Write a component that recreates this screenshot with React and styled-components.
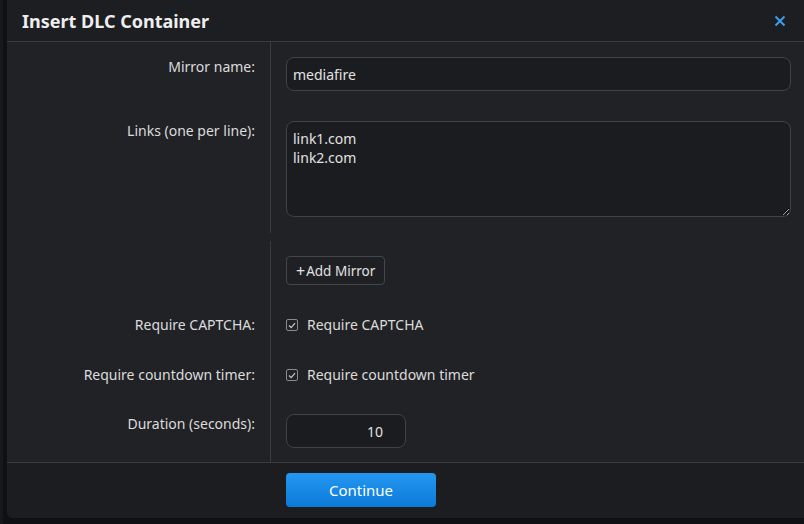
import React from "react"
import styled, { createGlobalStyle } from "styled-components"

const GlobalStyle = createGlobalStyle`
  html, body {
    margin: 0;
    padding: 0;
    background: #111214;
  }
  body {
    font-family: "Noto Sans", "Open Sans", sans-serif;
  }
`

const Page = styled.div`
  display: flex;
  height: 524px;
  padding: 0 0 6px 7px;
  box-sizing: border-box;
  background: linear-gradient(90deg, #17181b 0 3px, #0f1012 3px 7px);
`

const Dialog = styled.div`
  flex: 1;
  display: flex;
  flex-direction: column;
  background: #212226;
  border-bottom-left-radius: 6px;
  overflow: hidden;
`

const Header = styled.div`
  height: 41px;
  display: flex;
  align-items: center;
  justify-content: space-between;
  padding: 0 16px 0 15px;
  background: #1d1e22;
  border-bottom: 1px solid #3a3b3f;
`

const Title = styled.h2`
  margin: 0;
  font-size: 18px;
  font-weight: 700;
  color: #eeeeee;
`

const Close = styled.button`
  border: 0;
  background: none;
  padding: 0;
  display: flex;
  width: 16px;
  height: 16px;
  align-items: center;
  justify-content: center;
  cursor: pointer;
`

const Section = styled.div`
  display: grid;
  grid-template-columns: 264px 1fr;
  & + & {
    margin-top: 8px;
  }
`

const Label = styled.div`
  padding: ${p => p.$top}px 15px ${p => p.$bottom || 0}px 0;
  text-align: right;
  font-size: 14px;
  line-height: 20px;
  color: #dcdcdc;
  border-right: 1px solid #3a3b3f;
`

const Field = styled.div`
  padding: ${p => p.$top}px 13px ${p => p.$bottom || 0}px 15px;
  display: flex;
  align-items: flex-start;
`

const Input = styled.input`
  width: ${p => p.$width || "100%"};
  height: 34px;
  box-sizing: border-box;
  background: #1b1c1f;
  border: 1px solid #414247;
  border-radius: 8px;
  padding: 0 ${p => (p.$right ? "22px" : "6px")} 0 6px;
  text-align: ${p => (p.$right ? "right" : "left")};
  font-family: inherit;
  font-size: 14px;
  color: #e2e2e2;
  outline: none;
`

const TextArea = styled.textarea`
  width: 100%;
  height: 96px;
  box-sizing: border-box;
  background: #1b1c1f;
  border: 1px solid #414247;
  border-radius: 8px;
  padding: 7px 6px;
  font-family: inherit;
  font-size: 14px;
  line-height: 19px;
  color: #e2e2e2;
  outline: none;
  resize: vertical;
`

const GhostButton = styled.button`
  height: 29px;
  box-sizing: border-box;
  padding: 0 9px;
  background: #1f2024;
  border: 1px solid #45464b;
  border-radius: 4px;
  font-family: inherit;
  font-size: 13.5px;
  color: #e2e2e2;
  display: flex;
  align-items: center;
  gap: 1px;
`

const Plus = styled.span`
  font-size: 16px;
  line-height: 1;
`

const Check = styled.label`
  display: flex;
  align-items: center;
  gap: 9px;
  font-size: 14px;
  line-height: 20px;
  color: #dcdcdc;
`

const Box = styled.span`
  width: 12px;
  height: 12px;
  box-sizing: border-box;
  border: 1px solid #8a8b8f;
  border-radius: 2px;
  display: flex;
  align-items: center;
  justify-content: center;
`

const Footer = styled.div`
  flex: 1;
  background: #1c1d21;
  border-top: 1px solid #3a3b3f;
  padding: 10px 0 0 279px;
`

const Primary = styled.button`
  width: 150px;
  height: 34px;
  border: 0;
  border-radius: 4px;
  background: linear-gradient(180deg, #2398f2, #0c79d8);
  color: #ffffff;
  font-family: inherit;
  font-size: 15px;
  cursor: pointer;
`

function CheckItem({ children }) {
  return (
    <Check>
      <Box>
        <svg width="8" height="7" viewBox="0 0 8 7">
          <path d="M1 3.5 L3.2 5.6 L7 1.2" fill="none" stroke="#c8c8c8" strokeWidth="1.2" />
        </svg>
      </Box>
      {children}
    </Check>
  )
}

export default function App() {
  return (
    <>
      <GlobalStyle />
      <Page>
        <Dialog>
          <Header>
            <Title>Insert DLC Container</Title>
            <Close aria-label="close">
              <svg width="12" height="12" viewBox="0 0 12 12">
                <path d="M1.5 1.5 L10.5 10.5 M10.5 1.5 L1.5 10.5" stroke="#3f9ce9" strokeWidth="2" />
              </svg>
            </Close>
          </Header>

          <Section>
            <Label $top={15}>Mirror name:</Label>
            <Field $top={15}>
              <Input defaultValue="mediafire" />
            </Field>
            <Label $top={30} $bottom={16}>Links (one per line):</Label>
            <Field $top={30} $bottom={16}>
              <TextArea defaultValue={"link1.com\nlink2.com"} />
            </Field>
          </Section>

          <Section>
            <Label $top={15} />
            <Field $top={15}>
              <GhostButton>
                <Plus>+</Plus>Add Mirror
              </GhostButton>
            </Field>
            <Label $top={30}>Require CAPTCHA:</Label>
            <Field $top={30}>
              <CheckItem>Require CAPTCHA</CheckItem>
            </Field>
            <Label $top={30}>Require countdown timer:</Label>
            <Field $top={30}>
              <CheckItem>Require countdown timer</CheckItem>
            </Field>
            <Label $top={29} $bottom={14}>Duration (seconds):</Label>
            <Field $top={29} $bottom={14}>
              <Input $width="120px" $right defaultValue="10" />
            </Field>
          </Section>

          <Footer>
            <Primary>Continue</Primary>
          </Footer>
        </Dialog>
      </Page>
    </>
  )
}
